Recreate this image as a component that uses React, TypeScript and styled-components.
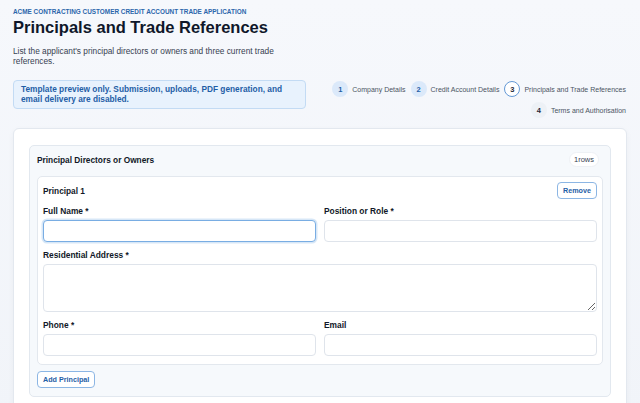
import React from 'react'
import styled, { createGlobalStyle } from 'styled-components'

const GlobalStyle = createGlobalStyle`
  html, body {
    margin: 0;
    padding: 0;
    background: linear-gradient(180deg, #f6f8fc 0%, #f1f4f9 100%);
    font-family: 'Liberation Sans', Arial, sans-serif;
    color: #111827;
  }
  * { box-sizing: border-box; }
`

interface IStep {
  num: number
  label: string
  state: 'done' | 'current' | 'todo'
}

const steps: IStep[] = [
  { num: 1, label: 'Company Details', state: 'done' },
  { num: 2, label: 'Credit Account Details', state: 'done' },
  { num: 3, label: 'Principals and Trade References', state: 'current' },
  { num: 4, label: 'Terms and Authorisation', state: 'todo' },
]

export default function App() {
  return (
    <>
      <GlobalStyle />
      <Page>
        <Eyebrow>ACME Contracting Customer Credit Account Trade Application</Eyebrow>
        <Title>Principals and Trade References</Title>
        <Description>
          List the applicant's principal directors or owners and three current trade
          references.
        </Description>

        <TopRow>
          <Notice>
            Template preview only. Submission, uploads, PDF generation, and email delivery
            are disabled.
          </Notice>
          <Stepper>
            {steps.map((step) => (
              <StepItem key={step.num}>
                <StepCircle state={step.state}>{step.num}</StepCircle>
                <StepLabel>{step.label}</StepLabel>
              </StepItem>
            ))}
          </Stepper>
        </TopRow>

        <Card>
          <Section>
            <SectionHead>
              <SectionTitle>Principal Directors or Owners</SectionTitle>
              <Badge>1rows</Badge>
            </SectionHead>

            <RowCard>
              <RowHead>
                <RowTitle>Principal 1</RowTitle>
                <OutlineButton type="button">Remove</OutlineButton>
              </RowHead>

              <FieldGrid>
                <Field>
                  <Label>Full Name *</Label>
                  <Input autoFocus isFocused />
                </Field>
                <Field>
                  <Label>Position or Role *</Label>
                  <Input />
                </Field>
                <Field wide>
                  <Label>Residential Address *</Label>
                  <TextArea />
                </Field>
                <Field>
                  <Label>Phone *</Label>
                  <Input />
                </Field>
                <Field>
                  <Label>Email</Label>
                  <Input />
                </Field>
              </FieldGrid>
            </RowCard>

            <AddRow>
              <OutlineButton type="button">Add Principal</OutlineButton>
            </AddRow>
          </Section>
        </Card>
      </Page>
    </>
  )
}

const Page = styled.div`
  padding: 8px 13px 0;
`

const Eyebrow = styled.div`
  font-size: 6.4px;
  line-height: 8px;
  font-weight: 700;
  text-transform: uppercase;
  color: #2c66ab;
`

const Title = styled.h1`
  margin: 1px 0 0;
  font-size: 16.5px;
  line-height: 20px;
  font-weight: 700;
  color: #0f172a;
`

const Description = styled.p`
  margin: 9px 0 0;
  max-width: 292px;
  font-size: 8.3px;
  line-height: 10px;
  color: #374151;
`

const TopRow = styled.div`
  display: grid;
  grid-template-columns: 293px 1fr;
  column-gap: 20px;
  align-items: start;
  margin-top: 14px;
`

const Notice = styled.div`
  padding: 4px 7px;
  background: #e8f2fd;
  border: 1px solid #c3dbf4;
  border-radius: 4px;
  font-size: 8.3px;
  line-height: 9.5px;
  font-weight: 700;
  color: #1f5ea6;
`

const Stepper = styled.div`
  display: flex;
  flex-wrap: wrap;
  justify-content: flex-end;
  column-gap: 5px;
  row-gap: 3px;
  padding-right: 1px;
`

const StepItem = styled.div`
  display: flex;
  align-items: center;
  gap: 4px;
  height: 18px;
`

const StepCircle = styled.span<{ state: IStep['state'] }>`
  display: inline-flex;
  align-items: center;
  justify-content: center;
  width: 16px;
  height: 16px;
  border-radius: 50%;
  font-size: 7.5px;
  font-weight: 700;
  background: ${(p) =>
    p.state === 'done' ? '#dbe9fa' : p.state === 'current' ? '#ffffff' : '#edf1f6'};
  border: 1px solid ${(p) => (p.state === 'current' ? '#6499d6' : 'transparent')};
  color: ${(p) => (p.state === 'done' ? '#1f5ea6' : '#1f2937')};
`

const StepLabel = styled.span`
  font-size: 7px;
  color: #4b5563;
  white-space: nowrap;
`

const Card = styled.div`
  margin-top: 9px;
  padding: 16px 15px 20px;
  background: #ffffff;
  border: 1px solid #e3e8ef;
  border-radius: 6px;
  box-shadow: 0 2px 6px rgba(15, 23, 42, 0.04);
`

const Section = styled.div`
  padding: 6px 7px 8px;
  background: #f6f9fc;
  border: 1px solid #e2e8ef;
  border-radius: 5px;
`

const SectionHead = styled.div`
  display: flex;
  align-items: center;
  justify-content: space-between;
  height: 15px;
  padding-right: 4px;
`

const SectionTitle = styled.h2`
  margin: 0;
  font-size: 8.3px;
  font-weight: 700;
  color: #111827;
`

const Badge = styled.span`
  display: inline-flex;
  align-items: center;
  height: 15px;
  padding: 0 4px;
  background: #ffffff;
  border: 1px solid #eef1f5;
  border-radius: 8px;
  font-size: 7.5px;
  color: #374151;
`

const RowCard = styled.div`
  margin-top: 9px;
  padding: 5px 5px 8px;
  background: #ffffff;
  border: 1px solid #e3e8ee;
  border-radius: 5px;
`

const RowHead = styled.div`
  display: flex;
  align-items: center;
  justify-content: space-between;
  height: 17px;
`

const RowTitle = styled.h3`
  margin: 0;
  font-size: 8.3px;
  font-weight: 700;
  color: #111827;
`

const OutlineButton = styled.button`
  height: 17px;
  padding: 0 5px;
  background: #ffffff;
  border: 1px solid #8cb6e4;
  border-radius: 4px;
  font-family: inherit;
  font-size: 7.2px;
  font-weight: 700;
  color: #1f5ea6;
  cursor: pointer;
`

const FieldGrid = styled.div`
  display: grid;
  grid-template-columns: 1fr 1fr;
  column-gap: 8px;
  row-gap: 8px;
  margin-top: 7px;
`

const Field = styled.div<{ wide?: boolean }>`
  display: flex;
  flex-direction: column;
  gap: 4px;
  grid-column: ${(p) => (p.wide ? '1 / -1' : 'auto')};
`

const Label = styled.label`
  font-size: 8.4px;
  line-height: 10px;
  font-weight: 700;
  color: #111827;
`

const Input = styled.input<{ isFocused?: boolean }>`
  height: 22px;
  padding: 0 6px;
  background: #ffffff;
  border: 1px solid ${(p) => (p.isFocused ? '#79ade3' : '#dfe4eb')};
  border-radius: 4px;
  box-shadow: ${(p) => (p.isFocused ? '0 0 0 1.5px rgba(96, 158, 222, 0.25)' : 'none')};
  font-family: inherit;
  font-size: 8.4px;
  color: #111827;
  outline: none;
`

const TextArea = styled.textarea`
  height: 48px;
  padding: 5px 6px;
  background: #ffffff;
  border: 1px solid #dfe4eb;
  border-radius: 4px;
  font-family: inherit;
  font-size: 8.4px;
  resize: vertical;
  outline: none;
`

const AddRow = styled.div`
  display: flex;
  margin-top: 6px;
`
